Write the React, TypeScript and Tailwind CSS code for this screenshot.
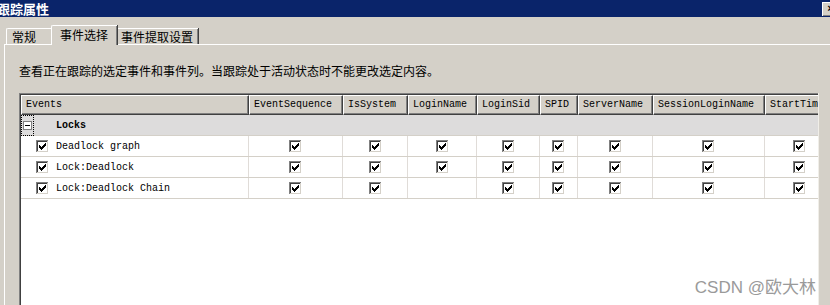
import React from 'react';

const MONO = { fontFamily: '"Liberation Mono", "DejaVu Sans Mono", monospace' };
const CJK = { fontFamily: '"Noto Sans CJK SC", "Noto Sans", sans-serif' };

const columns = [
  { name: 'Events', w: 'w-[228px]' },
  { name: 'EventSequence', w: 'w-[94px]' },
  { name: 'IsSystem', w: 'w-[65px]' },
  { name: 'LoginName', w: 'w-[69px]' },
  { name: 'LoginSid', w: 'w-[63px]' },
  { name: 'SPID', w: 'w-[38px]' },
  { name: 'ServerName', w: 'w-[75px]' },
  { name: 'SessionLoginName', w: 'w-[112px]' },
  { name: 'StartTime', w: 'w-[70px]' },
];

const rows = [
  { name: 'Deadlock graph', checks: [true, true, true, true, true, true, true, true] },
  { name: 'Lock:Deadlock', checks: [true, true, true, true, true, true, true, true] },
  { name: 'Lock:Deadlock Chain', checks: [true, true, false, true, true, true, true, true] },
];

// classic win2k checkbox, drawn pixel by pixel
function CheckBox() {
  const cols = [
    [3, 5], [4, 6], [5, 7], [6, 6], [7, 5], [8, 4], [9, 3],
  ];
  return (
    <svg width="13" height="13" viewBox="0 0 13 13" shapeRendering="crispEdges" className="block">
      <rect x="0" y="0" width="13" height="13" fill="#ffffff" />
      <rect x="0" y="0" width="12" height="1" fill="#808080" />
      <rect x="0" y="0" width="1" height="12" fill="#808080" />
      <rect x="1" y="1" width="10" height="1" fill="#404040" />
      <rect x="1" y="1" width="1" height="10" fill="#404040" />
      <rect x="1" y="11" width="11" height="1" fill="#d4d0c8" />
      <rect x="11" y="1" width="1" height="11" fill="#d4d0c8" />
      {cols.map(([x, y]) => (
        <rect key={x} x={x} y={y} width="1" height="3" fill="#000000" />
      ))}
    </svg>
  );
}

function Tab({ label, width, selected }: { label: string; width: string; selected?: boolean }) {
  return (
    <div
      className={
        selected
          ? `${width} h-[20px] -mx-[2px] -mb-px z-10 relative bg-[#d4d0c8] border-t border-l border-white rounded-tl-[2px] shadow-[inset_-1px_0_#808080,1px_0_#404040] pl-[8px] pt-[2px] text-[12px] leading-[14px] text-black`
          : `${width} h-[16px] bg-[#d4d0c8] border-t border-l border-white rounded-tl-[2px] shadow-[inset_-1px_0_#808080,1px_0_#404040] pl-[5px] pt-[1px] text-[12px] leading-[14px] text-black`
      }
      style={CJK}
    >
      {label}
    </div>
  );
}

export default function App() {
  return (
    <div className="w-[830px] h-[305px] overflow-hidden bg-[#d4d0c8] flex flex-col relative">
      {/* title bar */}
      <div className="h-[17px] shrink-0 bg-[#0a246a] flex items-center">
        <span className="-ml-[3px] text-white text-[13px] font-bold leading-[17px]" style={CJK}>
          跟踪属性
        </span>
        <div className="ml-auto -mr-[8px] w-[16px] h-[14px] bg-[#d4d0c8] border-t border-l border-white shadow-[inset_-1px_-1px_#808080] flex items-center justify-center text-[11px] font-bold leading-none text-black" style={MONO}>
          ×
        </div>
      </div>

      {/* tabs */}
      <div className="mt-[7px] h-[20px] shrink-0 pl-[6px] flex items-end">
        <Tab label="常规" width="w-[47px]" />
        <Tab label="事件选择" width="w-[66px]" selected />
        <Tab label="事件提取设置" width="w-[83px]" />
      </div>

      {/* tab page */}
      <div className="flex-1 ml-[4px] border-t border-l border-white flex flex-col pl-[14px] min-h-0">
        <div className="mt-[19px] h-[13px] text-[12px] leading-[13px] text-black whitespace-nowrap" style={CJK}>
          查看正在跟踪的选定事件和事件列。当跟踪处于活动状态时不能更改选定内容。
        </div>

        <div className="mt-[16px] flex-1 flex min-h-0">
          <div className="w-[799px] border-t border-l border-[#808080] flex min-h-0">
            <div className="flex-1 border-t border-l border-[#404040] bg-white overflow-hidden flex flex-col min-h-0" style={MONO}>
              {/* header */}
              <div className="flex h-[20px] shrink-0">
                {columns.map((c) => (
                  <div
                    key={c.name}
                    className={`${c.w} shrink-0 h-full bg-[#d4d0c8] border-t border-l border-white border-r border-b border-r-[#404040] border-b-[#404040] shadow-[inset_-1px_-1px_#808080] pl-[4px] text-[10px] leading-[17px] text-black whitespace-nowrap overflow-hidden`}
                  >
                    {c.name}
                  </div>
                ))}
              </div>

              {/* category row */}
              <div className="flex h-[21px] shrink-0 bg-[#dddcdc] border-b border-[#d4d0c8] items-center">
                <div className="ml-[0px] w-[13px] h-[21px] border border-dotted border-black flex items-center justify-center">
                  <div className="w-[9px] h-[9px] bg-white border border-[#808080] flex items-center justify-center">
                    <div className="w-[5px] h-px bg-black" />
                  </div>
                </div>
                <span className="ml-[22px] text-[10px] font-bold text-black">Locks</span>
              </div>

              {/* event rows */}
              {rows.map((r) => (
                <div key={r.name} className="flex h-[21px] shrink-0 border-b border-[#d4d0c8]">
                  <div className="w-[228px] shrink-0 border-r border-[#e0dcd8] flex items-center">
                    <div className="ml-[15px]">
                      <CheckBox />
                    </div>
                    <span className="ml-[7px] text-[10px] text-black whitespace-nowrap">{r.name}</span>
                  </div>
                  {r.checks.map((on, i) => (
                    <div
                      key={i}
                      className={`${columns[i + 1].w} shrink-0 border-r border-[#e0dcd8] flex items-center justify-center`}
                    >
                      {on && <CheckBox />}
                    </div>
                  ))}
                </div>
              ))}
              <div className="flex-1" />
            </div>
          </div>
          <div className="flex-1 border-l border-[#f0eee8]" />
        </div>
      </div>

      {/* watermark */}
      <div
        className="absolute right-[14px] bottom-[8px] text-[17px] leading-[19px] text-[#9a9a9a] whitespace-nowrap"
        style={{ fontFamily: '"Liberation Sans", "Noto Sans CJK SC", sans-serif' }}
      >
        CSDN @欧大林
      </div>
    </div>
  );
}
